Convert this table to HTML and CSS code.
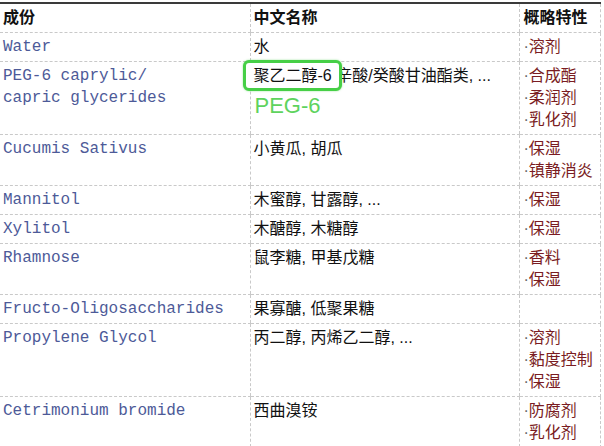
FILE: index.html
```html
<!DOCTYPE html>
<html lang="zh">
<head>
    <meta charset="UTF-8">
    <meta name="viewport" content="width=device-width, initial-scale=1.0">
    <title>成份表</title>
    <link rel="stylesheet" href="styles.css">
</head>
<body>
    <table class="ingredients">
        <colgroup>
            <col class="col-name">
            <col class="col-cn">
            <col class="col-props">
        </colgroup>
        <thead>
            <tr>
                <th>成份</th>
                <th>中文名称</th>
                <th>概略特性</th>
            </tr>
        </thead>
        <tbody>
            <tr>
                <td class="inci">Water</td>
                <td class="cn">水</td>
                <td class="props"><span>溶剂</span></td>
            </tr>
            <tr>
                <td class="inci">PEG-6 caprylic/<br>capric glycerides</td>
                <td class="cn"><span class="mark">聚乙二醇-6<span class="mark-label">PEG-6</span></span> 辛酸/癸酸甘油酯类, ...</td>
                <td class="props"><span>合成酯</span><span>柔润剂</span><span>乳化剂</span></td>
            </tr>
            <tr>
                <td class="inci">Cucumis Sativus</td>
                <td class="cn">小黄瓜, 胡瓜</td>
                <td class="props"><span>保湿</span><span>镇静消炎</span></td>
            </tr>
            <tr>
                <td class="inci">Mannitol</td>
                <td class="cn">木蜜醇, 甘露醇, ...</td>
                <td class="props"><span>保湿</span></td>
            </tr>
            <tr>
                <td class="inci">Xylitol</td>
                <td class="cn">木醣醇, 木糖醇</td>
                <td class="props"><span>保湿</span></td>
            </tr>
            <tr>
                <td class="inci">Rhamnose</td>
                <td class="cn">鼠李糖, 甲基戊糖</td>
                <td class="props"><span>香料</span><span>保湿</span></td>
            </tr>
            <tr>
                <td class="inci">Fructo-Oligosaccharides</td>
                <td class="cn">果寡醣, 低聚果糖</td>
                <td class="props"></td>
            </tr>
            <tr>
                <td class="inci">Propylene Glycol</td>
                <td class="cn">丙二醇, 丙烯乙二醇, ...</td>
                <td class="props"><span>溶剂</span><span>黏度控制</span><span>保湿</span></td>
            </tr>
            <tr>
                <td class="inci">Cetrimonium bromide</td>
                <td class="cn">西曲溴铵</td>
                <td class="props"><span>防腐剂</span><span>乳化剂</span></td>
            </tr>
        </tbody>
    </table>
</body>
</html>
```

FILE: styles.css
```css
body {
    margin: 0;
    padding: 0;
    background: #ffffff;
    font-family: "Liberation Sans", "Noto Sans CJK SC", sans-serif;
    color: #111;
}

.ingredients {
    width: 600px;
    margin-top: 2px;
    border-collapse: collapse;
    table-layout: fixed;
    border-top: 2px solid #3a3a3a;
}

.col-name {
    width: 250px;
}

.col-cn {
    width: 269px;
}

.col-props {
    width: 81px;
}

th, td {
    padding: 3px 3px 3px 3px;
    line-height: 22px;
    text-align: left;
    vertical-align: top;
    border-bottom: 1px dashed #c9c9c9;
    font-size: 16px;
}

th + th, td + td {
    border-left: 1px dashed #c9c9c9;
}

th:last-child, td:last-child {
    border-right: 1px dashed #c9c9c9;
    padding-left: 4px;
}

th {
    font-family: "Liberation Sans", "Noto Sans CJK SC", sans-serif;
    font-weight: bold;
    color: #111;
}

.inci {
    font-family: "Liberation Mono", monospace;
    color: #4d5a98;
}

.cn {
    color: #111;
}

.props span {
    display: block;
    color: #7a1c22;
}

.props span::before {
    content: "\00B7";
    font-family: "Liberation Sans", sans-serif;
    color: #666;
}

.mark {
    position: relative;
    z-index: 1;
    display: inline-block;
}

.mark::before {
    content: "";
    position: absolute;
    top: -5px;
    bottom: -4px;
    left: -11px;
    right: -10px;
    z-index: -1;
    background: #ffffff;
    border: 3px solid #46cf46;
    border-radius: 6px;
    box-shadow: 0 0 2px rgba(70, 207, 70, 0.6);
}

.mark-label {
    position: absolute;
    left: 1px;
    top: 30px;
    font-family: "Liberation Sans", sans-serif;
    font-size: 22px;
    line-height: 22px;
    color: #5ed35e;
    white-space: nowrap;
}
```
